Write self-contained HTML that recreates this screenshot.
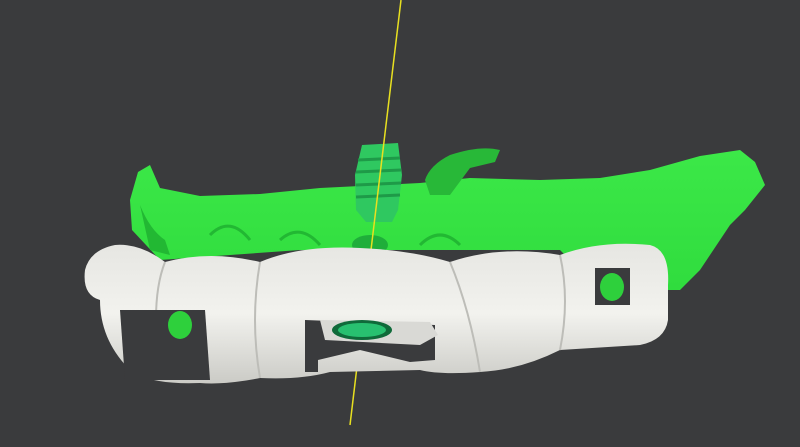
<!DOCTYPE html><html><head><style>html,body{margin:0;padding:0;background:#3a3b3d;}svg{display:block}</style></head><body>
<svg width="800" height="447" viewBox="0 0 800 447" xmlns="http://www.w3.org/2000/svg">
<defs>
<linearGradient id="w" x1="0" y1="0" x2="0" y2="1"><stop offset="0" stop-color="#e6e6e2"/><stop offset="0.5" stop-color="#f2f2ee"/><stop offset="1" stop-color="#cbcbc6"/></linearGradient>
<linearGradient id="g" x1="0" y1="0" x2="0" y2="1"><stop offset="0" stop-color="#3ce848"/><stop offset="1" stop-color="#30dc3e"/></linearGradient>
</defs>
<rect width="800" height="447" fill="#3a3b3d"/>
<!-- bone -->
<path d="M138 172 L150 165 L160 188 L200 196 L260 194 L320 188 L360 186 L420 183 L470 178 L540 180 L600 178 L650 170 L700 156 L740 150 L755 162 L765 185 L745 210 L730 225 L700 270 L680 290 L600 290 L560 250 L300 250 L160 260 L132 230 L130 200 Z" fill="url(#g)"/>
<path d="M425 180 Q430 165 450 155 Q480 145 500 150 L495 162 L470 168 L450 195 L430 195 Z" fill="#28b838"/>
<path d="M140 205 Q150 230 165 240 L170 255 L150 250 Z" fill="#22b833"/>
<path d="M210 235 Q230 215 250 240 M280 240 Q300 222 320 245 M420 245 Q440 225 460 245" stroke="#22b833" stroke-width="3" fill="none"/>
<ellipse cx="370" cy="245" rx="18" ry="10" fill="#1fae3a"/>
<!-- implant -->
<path d="M362 145 L398 143 L402 175 L398 210 L392 222 L366 222 L356 210 L355 175 Z" fill="#2fc860"/>
<path d="M358 160 L400 158 M356 172 L401 170 M356 185 L401 183 M356 197 L400 195" stroke="#1e9a48" stroke-width="3"/>
<line x1="401" y1="0" x2="350" y2="425" stroke="#e8e020" stroke-width="1.5"/>
<!-- guide -->
<path d="M85 270 Q90 250 115 245 Q140 243 165 262 Q210 250 260 262 Q300 245 360 248 Q410 250 450 262 Q500 245 560 255 Q600 240 650 245 Q670 250 668 285 L668 320 Q665 340 640 345 L560 350 Q520 370 480 372 Q440 375 420 370 L330 372 Q300 380 260 378 Q225 385 200 383 Q150 385 130 370 Q100 340 100 300 Q82 295 85 270 Z" fill="url(#w)"/>
<path d="M165 262 Q150 300 160 370 M260 262 Q250 320 260 378 M450 262 Q470 310 480 372 M560 255 Q570 300 560 350" stroke="#bdbdb8" stroke-width="2" fill="none"/>
<path d="M120 310 L205 310 L210 380 L125 380 Z" fill="#3a3b3d"/>
<ellipse cx="180" cy="325" rx="12" ry="14" fill="#2ed03c"/>
<path d="M595 268 L630 268 L630 305 L595 305 Z" fill="#3a3b3d"/>
<ellipse cx="612" cy="287" rx="12" ry="14" fill="#2ed03c"/>
<path d="M305 320 L435 325 L435 360 L410 362 L360 350 L318 360 L318 372 L305 372 Z" fill="#3a3b3d"/>
<path d="M320 320 L430 322 L438 335 L420 345 L325 340 Z" fill="#d9d9d5"/>
<ellipse cx="362" cy="330" rx="30" ry="10" fill="#0f6a3a"/>
<ellipse cx="362" cy="330" rx="24" ry="7" fill="#28c070"/>
</svg>
</body></html>
